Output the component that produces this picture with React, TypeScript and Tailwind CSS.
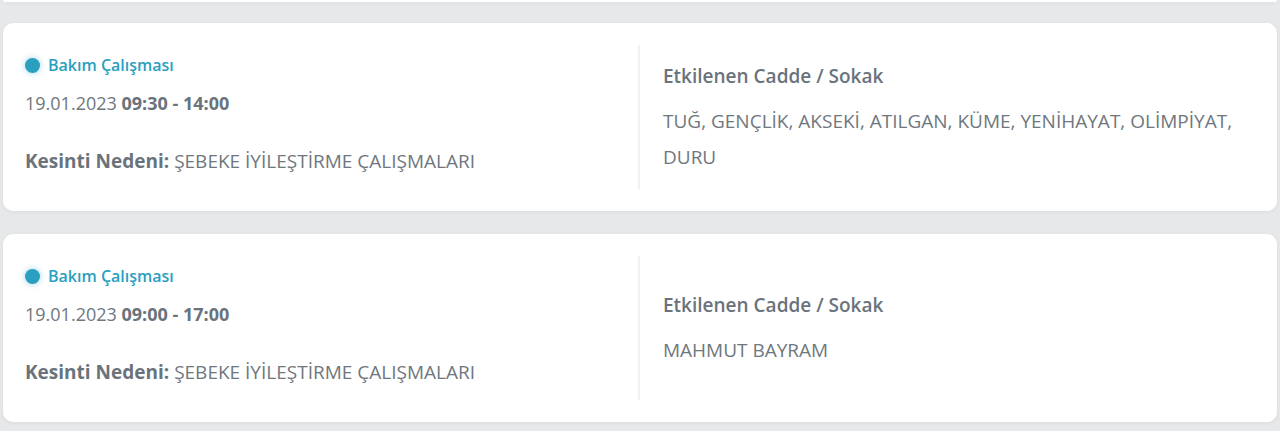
import React from 'react';

interface Outage {
  id: number;
  type: string;
  date: string;
  time: string;
  reason: string;
  streets: string;
}

const OUTAGES: Outage[] = [
  {
    id: 1,
    type: 'Bakım Çalışması',
    date: '19.01.2023',
    time: '09:30 - 14:00',
    reason: 'ŞEBEKE İYİLEŞTİRME ÇALIŞMALARI',
    streets: 'TUĞ, GENÇLİK, AKSEKİ, ATILGAN, KÜME, YENİHAYAT, OLİMPİYAT, DURU',
  },
  {
    id: 2,
    type: 'Bakım Çalışması',
    date: '19.01.2023',
    time: '09:00 - 17:00',
    reason: 'ŞEBEKE İYİLEŞTİRME ÇALIŞMALARI',
    streets: 'MAHMUT BAYRAM',
  },
];

const OutageCard: React.FC<{ item: Outage }> = ({ item }) => (
  <div className="bg-white rounded-[10px] shadow-[0_1px_4px_rgba(0,0,0,0.06)] h-[188px] py-[22px] flex">
    {/* Left: type, time, reason */}
    <div className="w-1/2 border-r-2 border-[#f0f1f2] pl-[22px] pt-[10px]">
      <div className="flex items-center h-[20px] gap-[8px]">
        <span className="w-[15px] h-[15px] rounded-full bg-[#2a9fc0] shadow-[0_0_6px_rgba(42,159,192,0.45)]" />
        <span className="text-[16px] font-semibold text-[#2a9fc0]">{item.type}</span>
      </div>
      <div className="mt-[15px] h-[26px] leading-[26px] text-[18px] text-[#6f777e] whitespace-nowrap">
        {item.date} <span className="font-bold text-[#6a737b]">{item.time}</span>
      </div>
      <div className="mt-[32px] h-[26px] leading-[26px] text-[19px] text-[#6f777e] whitespace-nowrap">
        <span className="font-bold text-[#6a737b]">Kesinti Nedeni:</span> {item.reason}
      </div>
    </div>

    {/* Right: affected streets */}
    <div className="w-1/2 pl-[23px] pr-[30px] flex flex-col justify-center pt-[4px]">
      <div className="h-[26px] leading-[26px] text-[19px] font-semibold text-[#6a737b]">
        Etkilenen Cadde / Sokak
      </div>
      <div className="mt-[14px] leading-[36px] text-[19px] text-[#6f777e]">{item.streets}</div>
    </div>
  </div>
);

export default function App() {
  return (
    <div
      className="min-h-[431px] bg-[#e6e8ea] px-[3px]"
      style={{ fontFamily: '"Open Sans", "Noto Sans", sans-serif' }}
    >
      {/* bottom edge of the previous card */}
      <div className="h-[2px] bg-white rounded-b-[10px] shadow-[0_1px_4px_rgba(0,0,0,0.06)]" />
      <div className="flex flex-col gap-[23px] pt-[21px]">
        {OUTAGES.map((o) => (
          <OutageCard key={o.id} item={o} />
        ))}
      </div>
    </div>
  );
}
